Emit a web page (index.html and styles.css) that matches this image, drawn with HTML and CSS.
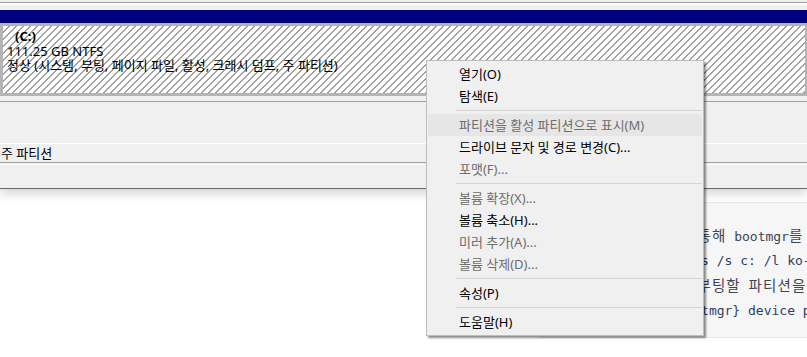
FILE: index.html
```html
<!DOCTYPE html>
<html lang="ko">
<head>
  <meta charset="UTF-8">
  <title>디스크 관리</title>
  <link rel="stylesheet" href="styles.css">
</head>
<body>
  <div class="window">
    <div class="strip light h2"></div>
    <div class="strip rule"></div>
    <div class="strip white h2"></div>
    <div class="strip light h5"></div>
    <div class="partition-bar"></div>
    <div class="volume">
      <div class="volume-box">
        <div class="vol-name">(C:)</div>
        <div>111.25 GB NTFS</div>
        <div>정상 (시스템, 부팅, 페이지 파일, 활성, 크래시 덤프, 주 파티션)</div>
      </div>
    </div>
    <div class="strip light h5"></div>
    <div class="strip rule"></div>
    <div class="strip light h41"></div>
    <div class="strip white h1"></div>
    <div class="list-row">주 파티션</div>
    <div class="strip rule"></div>
    <div class="strip light h1"></div>
    <div class="strip white h1"></div>
    <div class="strip light h23"></div>
  </div>

  <div class="page">
    <pre class="code"><span class="cm"># bcdboot <span class="ko">명령을</span> <span class="ko">통해</span> bootmgr<span class="ko">를</span> <span class="ko">복구합니다</span></span>
bcdboot c:\windows /s c: /l ko-KR
<span class="cm"># bcdedit<span class="ko">를</span> <span class="ko">써서</span> <span class="ko">부팅할</span> <span class="ko">파티션을</span> <span class="ko">지정합니다</span></span>
bcdedit /set {bootmgr} device partition=c:</pre>
  </div>

  <ul class="menu">
    <li>열기(O)</li>
    <li>탐색(E)</li>
    <li class="sep"></li>
    <li class="disabled hover">파티션을 활성 파티션으로 표시(M)</li>
    <li>드라이브 문자 및 경로 변경(C)...</li>
    <li class="disabled">포맷(F)...</li>
    <li class="sep"></li>
    <li class="disabled">볼륨 확장(X)...</li>
    <li>볼륨 축소(H)...</li>
    <li class="disabled">미러 추가(A)...</li>
    <li class="disabled">볼륨 삭제(D)...</li>
    <li class="sep"></li>
    <li>속성(P)</li>
    <li class="sep"></li>
    <li>도움말(H)</li>
  </ul>
</body>
</html>
```

FILE: styles.css
```css
body {
  margin: 0;
  background-color: #ffffff;
  font-family: "Noto Sans", "Noto Sans CJK KR", sans-serif;
  font-size: 13px;
  overflow: hidden;
}

.window {
  background-color: #f0f0f0;
  border-bottom: 1px solid #6b6b6b;
  box-shadow: 0 3px 12px rgba(0, 0, 0, 0.22);
  position: relative;
}

.strip { height: 1px; }
.light { background-color: #f0f0f0; }
.white { background-color: #ffffff; }
.rule { background-color: #a0a0a0; }
.h1 { height: 1px; }
.h2 { height: 2px; }
.h5 { height: 5px; }
.h23 { height: 23px; }
.h41 { height: 41px; }

.partition-bar {
  height: 13px;
  background-color: #000080;
}

.volume {
  background-color: #b4b4b4;
  padding: 3px 2px 3px 3px;
}

.volume-box {
  height: 67px;
  box-sizing: border-box;
  padding: 3px 0 0 4px;
  line-height: 14.5px;
  color: #000;
  background-color: #ffffff;
  background-image: repeating-linear-gradient(135deg, transparent 0 4.15px, #a0a0a0 4.15px 4.95px);
}

.vol-name {
  font-weight: bold;
  padding-left: 8px;
}

.list-row {
  height: 18px;
  line-height: 18px;
  padding-left: 1px;
  background-color: #f0f0f0;
  color: #000;
}

.page {
  padding-top: 13px;
}

.code {
  margin: 0 0 0 540px;
  height: 136px;
  box-sizing: border-box;
  padding: 20px 0 0 28px;
  background-color: #f6f6f6;
  border-top: 1px solid #e6e6e6;
  border-bottom: 1px solid #e6e6e6;
  font-family: "DejaVu Sans Mono", "Noto Sans CJK KR", monospace;
  font-size: 13px;
  line-height: 24px;
  color: #2b3f66;
  white-space: pre;
  overflow: hidden;
}

.code .cm {
  color: #3c4654;
}

/* hangul takes two columns */
.code .ko {
  font-family: "Noto Sans CJK KR", monospace;
  font-size: 14.5px;
  letter-spacing: 1.1px;
}

.menu {
  position: absolute;
  left: 426px;
  top: 60px;
  width: 274px;
  margin: 0;
  padding: 2px 1px;
  list-style: none;
  background-color: #f0f0f0;
  border: 1px solid #bdbdbd;
  box-shadow: 2px 2px 2px rgba(0, 0, 0, 0.45);
}

.menu li {
  height: 22px;
  line-height: 22px;
  padding-left: 31px;
  color: #000;
  white-space: nowrap;
}

.menu li.disabled {
  color: #6d6d6d;
}

.menu li.hover {
  background-color: #e6e6e6;
}

.menu li.sep {
  height: 7px;
  padding: 0;
  margin-left: 28px;
  position: relative;
}

.menu li.sep::after {
  content: "";
  position: absolute;
  left: 0;
  right: 0;
  top: 3px;
  height: 1px;
  background-color: #d5d5d5;
}
```
